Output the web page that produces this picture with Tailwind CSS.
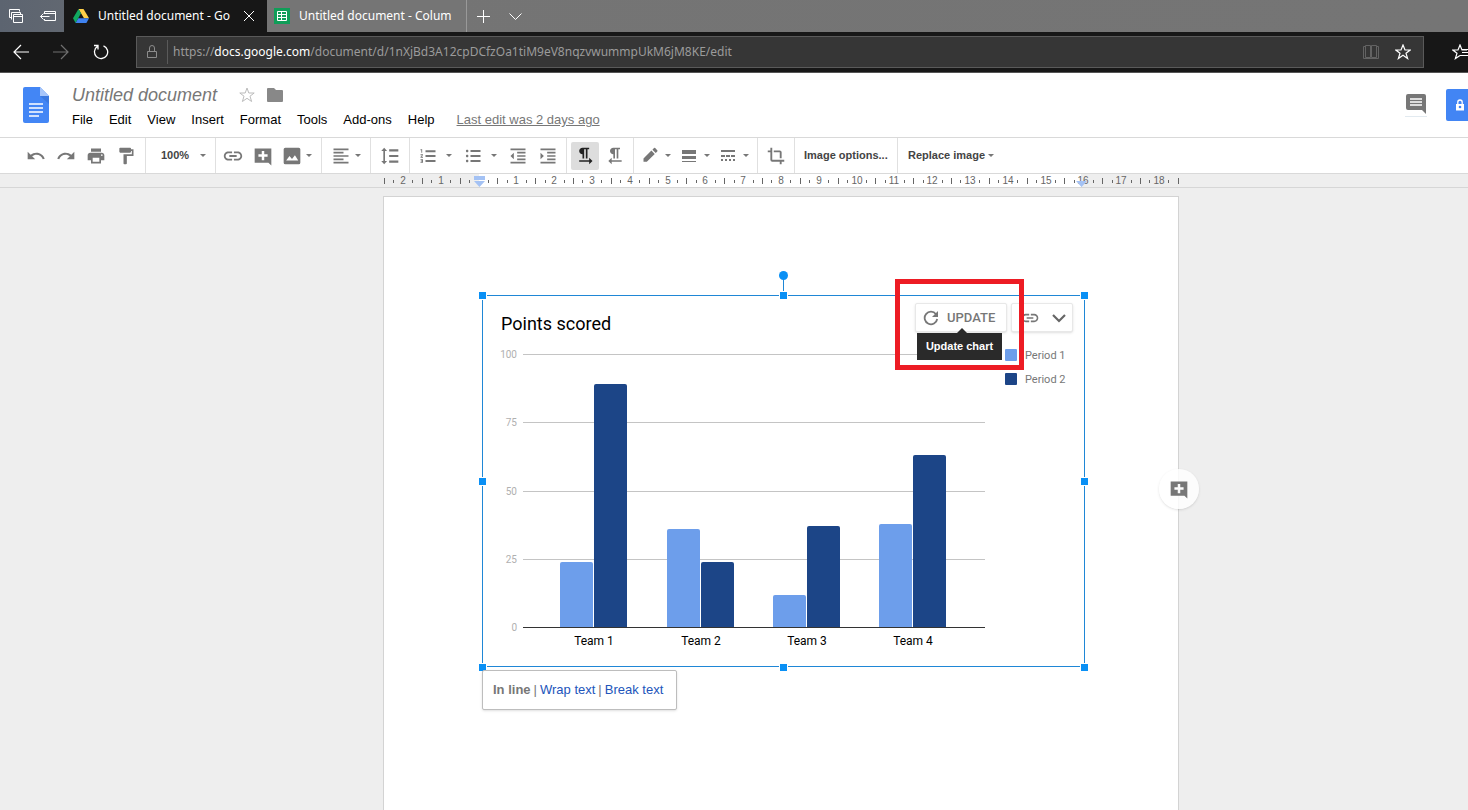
<!DOCTYPE html>
<html lang="en">
<head>
  <meta charset="UTF-8">
  <title>Untitled document - Google Docs</title>
  <script src="https://cdn.jsdelivr.net/npm/@tailwindcss/browser@4"></script>
</head>
<body class="h-screen flex flex-col overflow-hidden bg-[#eeeeee] font-['Liberation_Sans',Arial,sans-serif]">

  <!-- shared icons -->
  <svg class="hidden">
    <symbol id="caret" viewBox="0 0 6 4"><path d="M0 0h6L3 3z"/></symbol>
    <symbol id="add-comment" viewBox="0 0 24 24"><path d="M22 3H2v17h16.500l3.500 3.500zM17.500 13h-4v4h-3v-4h-4v-3h4V6h3v4h4z"/></symbol>
    <symbol id="link" viewBox="0 0 24 24"><path d="M3.900 12c0-1.710 1.390-3.100 3.100-3.100h4V7H7c-2.760 0-5 2.240-5 5s2.240 5 5 5h4v-1.900H7c-1.710 0-3.100-1.390-3.100-3.100zM8 13h8v-2H8v2zm9-6h-4v1.900h4c1.710 0 3.100 1.390 3.100 3.100s-1.390 3.100-3.100 3.100h-4V17h4c2.760 0 5-2.240 5-5s-2.240-5-5-5z"/></symbol>
  </svg>

  <!-- browser tabs -->
  <div class="h-8 shrink-0 flex bg-linear-to-r from-[#5c6470] via-[#747474] via-20% to-[#757575] text-white text-xs font-['Noto_Sans','Open_Sans',sans-serif]">
    <div class="w-16 shrink-0 flex items-center pl-2 gap-4">
      <button aria-label="Tabs set aside"><svg class="w-4 h-4" viewBox="0 0 16 16" fill="none" stroke="#fff"><path d="M3.500 9.500h-2v-8h10v2M3.500 11.500v-7h9v2M5.500 6.500h9v8h-9zM5.500 8.500h9"/></svg></button>
      <button aria-label="Set tabs aside"><svg class="w-4 h-4" viewBox="0 0 16 16" fill="none" stroke="#fff"><path d="M4.500 6V3.500h11v9h-11V11M4.500 5.500h11M.5 8.500h9M3.500 5.500l-3 3 3 3"/></svg></button>
    </div>
    <div class="w-[203px] shrink-0 flex items-center bg-[#171717] pl-[9px] pr-3">
      <svg class="w-4 h-4 shrink-0" viewBox="0 0 16 16"><path d="M5.500 1h5L16 10.300h-5z" fill="#ffcf48"/><path d="M5.500 1L8 5.300 2.600 15 0 10.300z" fill="#11a861"/><path d="M5.300 10.300H16L13.400 15H2.600z" fill="#3f82f0"/></svg>
      <span class="ml-[9px] w-[138px] whitespace-nowrap">Untitled document - Go</span>
      <button class="ml-[7px]" aria-label="Close tab"><svg class="w-3 h-3" viewBox="0 0 12 12" stroke="#fff" fill="none"><path d="M1 1l10 10M11 1L1 11"/></svg></button>
    </div>
    <div class="w-[200px] shrink-0 flex items-center bg-[#757575] border-r border-[#999999] pl-[7px]">
      <svg class="w-4 h-4 shrink-0" viewBox="0 0 16 16"><path d="M0 0h16v16H0z" fill="#0f9d58"/><path d="M3.500 3.500h9v9h-9zM3.500 6.500h9M3.500 9.500h9M7.500 3.500v9" stroke="#fff" fill="none"/></svg>
      <span class="ml-[9px] whitespace-nowrap">Untitled document - Colum</span>
    </div>
    <button class="w-[33px] grid place-items-center" aria-label="New tab"><svg class="w-[13px] h-[13px]" viewBox="0 0 13 13" stroke="#fff"><path d="M6.500 0v13M0 6.500h13"/></svg></button>
    <button class="w-[30px] grid place-items-center" aria-label="Tab previews"><svg class="w-[13px] h-[13px]" viewBox="0 0 13 13" stroke="#fff" fill="none"><path d="M.5 3.500l6 6 6-6"/></svg></button>
  </div>

  <!-- address bar -->
  <div class="h-[41px] shrink-0 flex items-center bg-[#171717] border-b border-[#555555] overflow-hidden">
    <button class="ml-[13px] w-4 shrink-0" aria-label="Back"><svg class="w-4 h-4" viewBox="0 0 16 16" stroke="#fff" fill="none" stroke-width="1.200"><path d="M1 8h15M8 1L1 8l7 7"/></svg></button>
    <button class="ml-6 w-4 shrink-0" aria-label="Forward"><svg class="w-4 h-4" viewBox="0 0 16 16" stroke="#707070" fill="none" stroke-width="1.200"><path d="M0 8h15M8 1l7 7-7 7"/></svg></button>
    <button class="ml-6 w-4 shrink-0" aria-label="Refresh"><svg class="w-4 h-4" viewBox="0 0 16 16" stroke="#fff" fill="none" stroke-width="1.300"><path d="M10.500 1.800a6.600 6.600 0 1 1-6 .6M1 1.500h4v4"/></svg></button>
    <div class="ml-[27px] flex-1 h-8 flex items-center bg-[#363636] border border-[#5a5a5a]">
      <svg class="ml-[9px] w-3 h-4 shrink-0" viewBox="0 0 12 16" stroke="#8c8c8c" fill="none"><path d="M1.500 7.500h9v6h-9zM3.500 7V4a2.500 2.500 0 0 1 5 0v3"/></svg>
      <div class="ml-[9px] h-6 w-px shrink-0 bg-[#5a5a5a]"></div>
      <div class="ml-[5px] flex-1 whitespace-nowrap text-xs text-[#9b9b9b] font-['Noto_Sans','Open_Sans',sans-serif]">https://<span class="text-white">docs.google.com</span>/document/d/1nXjBd3A12cpDCfzOa1tiM9eV8nqzvwummpUkM6jM8KE/edit</div>
      <button aria-label="Reading view"><svg class="w-4 h-4" viewBox="0 0 16 16" stroke="#636363" fill="none"><path d="M2.500 1.500h5v12h-5zM8.500 1.500h5v12h-5zM2.500 2.500h-2v12h15v-12h-2"/></svg></button>
      <button class="ml-4 mr-3" aria-label="Add to favorites"><svg class="w-4 h-4" viewBox="0 0 16 16" stroke="#fff" fill="none" stroke-width="1.200"><path d="M8 1l2 5h5.200l-4.200 3.300 1.600 5.200L8 11.300l-4.600 3.200L5 9.300.8 6H6z"/></svg></button>
    </div>
    <button class="ml-7 w-4 shrink-0" aria-label="Favorites"><svg class="w-6 h-4" viewBox="0 0 24 16" stroke="#fff" fill="none" stroke-width="1.200"><path d="M15 6h-5L8 1 6 6H.8L5 9.300l-1.600 5.200L8 11.500M10 8.500h12M8 11.500h14M10 5.500h12"/></svg></button>
  </div>

  <!-- document header -->
  <header class="h-16 shrink-0 flex bg-white overflow-hidden">
    <a href="#" class="ml-[23px] mt-[14px] w-[26px] shrink-0" aria-label="Docs home"><svg class="w-[26px] h-9" viewBox="0 0 26 36"><path d="M2 0h15l9 9v25a2 2 0 0 1-2 2H2a2 2 0 0 1-2-2V2a2 2 0 0 1 2-2z" fill="#4386f5"/><path d="M17 0l9 9h-9z" fill="#a6c5fa"/><path d="M17 9h9v8z" fill="#3a78e0"/><path d="M6 17h14M6 21h14M6 25h14M6 29h10" stroke="#fff" stroke-width="1.600"/></svg></a>
    <div class="ml-[23px] flex-1">
      <div class="mt-3 h-5 flex items-center">
        <h1 class="italic text-lg leading-5 text-[#777777]">Untitled document</h1>
        <button class="ml-[22px]" aria-label="Star"><svg class="w-4 h-4" viewBox="0 0 16 16" stroke="#bbbbbb" fill="none"><path d="M8 1l1.800 5h5.400L11 9.200l1.600 5.300L8 11.300l-4.600 3.200L5 9.200.8 6h5.400z"/></svg></button>
        <button class="ml-3" aria-label="Move to folder"><svg class="w-4 h-4" viewBox="0 0 16 16" fill="#888888"><path d="M1 1h6l2 2h6a1 1 0 0 1 1 1v10a1 1 0 0 1-1 1H1a1 1 0 0 1-1-1V2a1 1 0 0 1 1-1z"/></svg></button>
      </div>
      <nav class="mt-[5px] h-5 flex items-center gap-4 text-[13px] text-black whitespace-nowrap">
        <button>File</button>
        <button>Edit</button>
        <button>View</button>
        <button>Insert</button>
        <button>Format</button>
        <button>Tools</button>
        <button>Add-ons</button>
        <button>Help</button>
        <a href="#" class="ml-[6px] underline text-[#777777]">Last edit was 2 days ago</a>
      </nav>
    </div>
    <button class="mt-[21px] mr-[19px] w-[22px] h-[23px] shrink-0 border-b border-[#e2eaf0]" aria-label="Comments"><svg class="w-[22px] h-[22px]" viewBox="0 0 22 22"><path d="M3 0h16a2 2 0 0 1 2 2v18l-4-4H3a2 2 0 0 1-2-2V2a2 2 0 0 1 2-2z" fill="#777777"/><path d="M5 5h12M5 8h12M5 11h12" stroke="#fff" stroke-width="1.500"/></svg></button>
    <button class="mt-4 h-8 w-[22px] shrink-0 overflow-hidden flex items-center bg-[#4285f4] rounded-l-xs pl-2" aria-label="Share"><svg class="w-3 h-3 shrink-0" viewBox="0 0 12 12"><path d="M2 5h8v6.500H2z" fill="#fff"/><path d="M3.800 5V3.200a2.200 2.200 0 0 1 4.400 0V5" stroke="#fff" fill="none" stroke-width="1.300"/><circle cx="6" cy="8" r="1.300" fill="#4285f4"/></svg></button>
  </header>

  <!-- toolbar -->
  <div class="h-[37px] shrink-0 flex bg-white border-y border-[#d9d9d9] text-[11px] font-bold text-[#444444] fill-[#777777] whitespace-nowrap">
    <div class="w-[146px] flex items-center pl-[21px] border-r border-[#e0e0e0]">
      <button class="w-[30px] grid place-items-center" aria-label="Undo"><svg class="w-5 h-5" viewBox="0 0 24 24"><path d="M12.500 8c-2.650 0-5.050.99-6.900 2.600L2 7v9h9l-3.620-3.620c1.390-1.160 3.160-1.880 5.120-1.880 3.540 0 6.550 2.310 7.600 5.500l2.370-.78C21.080 11.030 17.150 8 12.500 8z"/></svg></button>
      <button class="w-[30px] grid place-items-center" aria-label="Redo"><svg class="w-5 h-5" viewBox="0 0 24 24"><path d="M18.400 10.600C16.550 8.990 14.150 8 11.500 8c-4.650 0-8.580 3.030-9.960 7.220L3.900 16c1.050-3.190 4.050-5.500 7.600-5.500 1.950 0 3.730.72 5.120 1.880L13 16h9V7l-3.600 3.600z"/></svg></button>
      <button class="w-[30px] grid place-items-center" aria-label="Print"><svg class="w-5 h-5" viewBox="0 0 24 24"><path d="M19 8H5c-1.660 0-3 1.340-3 3v6h4v4h12v-4h4v-6c0-1.660-1.340-3-3-3zm-3 11H8v-5h8v5zm3-7c-.55 0-1-.45-1-1s.45-1 1-1 1 .45 1 1-.45 1-1 1zm-1-9H6v4h12V3z"/></svg></button>
      <button class="w-[30px] grid place-items-center" aria-label="Paint format"><svg class="w-5 h-5" viewBox="0 0 24 24"><path d="M18 4V3c0-.55-.45-1-1-1H5c-.55 0-1 .45-1 1v4c0 .55.45 1 1 1h12c.55 0 1-.45 1-1V6h1v4H9v11c0 .55.45 1 1 1h2c.55 0 1-.45 1-1v-9h8V4h-3z"/></svg></button>
    </div>
    <div class="w-[70px] flex items-center border-r border-[#e0e0e0]">
      <select aria-label="Zoom" class="appearance-none w-[54px] pl-[15px] bg-transparent">
        <option>100%</option>
      </select>
      <svg class="w-[6px] h-1"><use href="#caret"/></svg>
    </div>
    <div class="w-[106px] flex items-center pl-[2px] border-r border-[#e0e0e0]">
      <button class="w-[30px] grid place-items-center" aria-label="Insert link"><svg class="w-[22px] h-[22px]"><use href="#link"/></svg></button>
      <button class="w-[30px] grid place-items-center" aria-label="Add comment"><svg class="w-5 h-5"><use href="#add-comment"/></svg></button>
      <button class="flex items-center pl-1 gap-1" aria-label="Insert image"><svg class="w-5 h-5" viewBox="0 0 24 24"><path d="M22 20V4a2 2 0 0 0-2-2H4a2 2 0 0 0-2 2v16a2 2 0 0 0 2 2h16a2 2 0 0 0 2-2zM5 17.500l4-5.500 3 3.500 3.500-4.500 4 6.500z"/></svg><svg class="w-[6px] h-1"><use href="#caret"/></svg></button>
    </div>
    <div class="w-[49px] flex items-center pl-[9px] border-r border-[#e0e0e0]">
      <button class="flex items-center gap-1" aria-label="Align"><svg class="w-5 h-5" viewBox="0 0 24 24"><path d="M15 15H3v2h12v-2zm0-8H3v2h12V7zM3 13h18v-2H3v2zm0 8h18v-2H3v2zM3 3v2h18V3H3z"/></svg><svg class="w-[6px] h-1"><use href="#caret"/></svg></button>
    </div>
    <div class="w-[39px] grid place-items-center border-r border-[#e0e0e0]">
      <button aria-label="Line spacing"><svg class="w-5 h-5" viewBox="0 0 24 24"><path d="M6 6h2.500L5 2 1.500 6H4v12H1.500L5 22l3.500-4H6V6zm5-2v2.500h11V4H11zm0 16h11v-2.500H11V20zm0-6.700h11v-2.500H11v2.500z"/></svg></button>
    </div>
    <div class="w-[157px] flex items-center pl-2 border-r border-[#e0e0e0]">
      <button class="flex items-center gap-2 w-[45px]" aria-label="Numbered list"><svg class="w-5 h-5" viewBox="0 0 24 24"><path d="M3 17h2v.5H4v1h1v.5H3v1h3v-4H3v1zm1-9h1V4H3v1h1v3zm-1 3h1.800L3 13.100v.9h3v-1H4.200L6 10.900V10H3v1zm6-6v2.400h12V5H9zm0 14.200h12v-2.400H9v2.400zm0-6h12v-2.400H9v2.400z"/></svg><svg class="w-[6px] h-1"><use href="#caret"/></svg></button>
      <button class="flex items-center gap-2 w-[45px]" aria-label="Bulleted list"><svg class="w-5 h-5" viewBox="0 0 24 24"><path d="M5 10.500c-.83 0-1.500.67-1.500 1.500s.67 1.500 1.500 1.500 1.500-.67 1.500-1.500-.67-1.500-1.500-1.500zm0-6c-.83 0-1.500.67-1.500 1.500S4.170 7.500 5 7.500 6.500 6.830 6.500 6 5.830 4.500 5 4.500zm0 12c-.83 0-1.500.68-1.500 1.500s.68 1.500 1.500 1.500 1.500-.68 1.500-1.500-.67-1.500-1.500-1.500zM9 19.200h12v-2.400H9v2.400zm0-6h12v-2.400H9v2.400zm0-8.400v2.400h12V4.800H9z"/></svg><svg class="w-[6px] h-1"><use href="#caret"/></svg></button>
      <button class="w-[30px]" aria-label="Decrease indent"><svg class="w-5 h-5" viewBox="0 0 24 24"><path d="M11 17h10v-2H11v2zm-8-5l4 4V8l-4 4zm0 9h18v-2H3v2zM3 3v2h18V3H3zm8 6h10V7H11v2zm0 4h10v-2H11v2z"/></svg></button>
      <button aria-label="Increase indent"><svg class="w-5 h-5" viewBox="0 0 24 24"><path d="M3 21h18v-2H3v2zM3 8v8l4-4-4-4zm8 9h10v-2H11v2zM3 3v2h18V3H3zm8 6h10V7H11v2zm0 4h10v-2H11v2z"/></svg></button>
    </div>
    <div class="w-[67px] flex items-center pl-1 gap-[6px] border-r border-[#e0e0e0]">
      <button class="w-7 h-7 grid place-items-center rounded-xs bg-[#dddddd] fill-[#222222]" aria-label="Left-to-right"><svg class="w-5 h-5" viewBox="0 0 24 24"><path d="M9 10v5h2V4h2v11h2V4h2V2H9C6.790 2 5 3.790 5 6s1.790 4 4 4zm12 8l-4-4v3H5v2h12v3l4-4z"/></svg></button>
      <button aria-label="Right-to-left"><svg class="w-5 h-5" viewBox="0 0 24 24"><path d="M10 10v5h2V4h2v11h2V4h2V2h-8C7.790 2 6 3.790 6 6s1.790 4 4 4zm-2 7v-3l-4 4 4 4v-3h12v-2H8z"/></svg></button>
    </div>
    <div class="w-[124px] flex items-center pl-[7px] gap-[9px] border-r border-[#e0e0e0]">
      <button class="flex items-center gap-1" aria-label="Border color"><svg class="w-5 h-5" viewBox="0 0 24 24"><path d="M3 15v4h4L16.500 9.500l-4-4zM19.500 6.500a1 1 0 0 0 0-1.400L17 2.500a1 1 0 0 0-1.400 0L13.700 4.400l4 4z"/></svg><svg class="w-[6px] h-1"><use href="#caret"/></svg></button>
      <button class="flex items-center gap-1" aria-label="Border weight"><svg class="w-5 h-5" viewBox="0 0 20 20"><path d="M2 4h14v4H2zM2 10h14v3H2zM2 15h14v1H2z"/></svg><svg class="w-[6px] h-1"><use href="#caret"/></svg></button>
      <button class="flex items-center gap-1" aria-label="Border dash"><svg class="w-5 h-5" viewBox="0 0 20 20"><path d="M2 4h14v2H2zM2 9h4v2H2zM7 9h4v2H7zM12 9h4v2h-4zM2 13h2v2H2zM6 13h2v2H6zM10 13h2v2h-2zM14 13h2v2h-2z"/></svg><svg class="w-[6px] h-1"><use href="#caret"/></svg></button>
    </div>
    <div class="w-[37px] grid place-items-center border-r border-[#e0e0e0]">
      <button aria-label="Crop"><svg class="w-[18px] h-[18px]" viewBox="0 0 24 24"><path d="M17 15h2.500V7a2.500 2.500 0 0 0-2.500-2.500H9V7h8v8zM7 17V1H4.500v3.500H1V7h3.500v10A2.500 2.500 0 0 0 7 19.500h10V23h2.500v-3.500H23V17H7z"/></svg></button>
    </div>
    <div class="w-[103px] flex items-center pl-[9px] border-r border-[#e0e0e0]">
      <button>Image options...</button>
    </div>
    <button class="flex items-center pl-[10px] gap-[3px]">Replace image <svg class="w-[6px] h-1"><use href="#caret"/></svg></button>
  </div>

  <!-- ruler, one unit is 1cm -->
  <div class="h-[14px] shrink-0 border-b border-[#d6d6d6] pl-[383px]">
    <svg id="ruler" class="w-[797px] h-[13px]" viewBox="0 0 797 13"></svg>
  </div>

  <!-- page -->
  <main class="flex-1 min-h-0 pt-2 pl-[383px]">
    <div class="relative w-[796px] h-full bg-white border border-b-0 border-[#d3d3d3] pt-[98px] pl-[98px]">
      <div class="relative w-[603px]">
        <svg id="chart" class="block w-[603px] h-[373px] font-['Roboto',sans-serif]" viewBox="0 0 603 373"></svg>

        <!-- linked chart controls -->
        <div class="absolute top-2 right-3 flex gap-1">
          <button class="w-[92px] h-[29px] flex items-center pl-[7px] gap-2 bg-white border border-[#e8e8e8] rounded-xs shadow text-[13px] font-medium text-[#777777] font-['Roboto',sans-serif]">
            <svg class="w-4 h-4" viewBox="0 0 16 16"><path d="M13 4.200A6.300 6.300 0 1 0 14.200 9" fill="none" stroke="#777777" stroke-width="1.800"/><path d="M15 1v6H9z" fill="#777777"/></svg>
            UPDATE
          </button>
          <button class="w-[62px] h-[29px] flex items-center pl-2 gap-3 bg-white border border-[#e8e8e8] rounded-xs shadow fill-[#777777]" aria-label="Link options">
            <svg class="w-5 h-5"><use href="#link"/></svg>
            <svg class="w-[14px] h-[14px]" viewBox="0 0 14 14" fill="none" stroke="#666666" stroke-width="2.200"><path d="M1 4l6 6 6-6"/></svg>
          </button>
        </div>
        <div role="tooltip" class="absolute left-[435px] top-[38px] w-[85px] h-[27px] grid place-items-center bg-[#2a2a2a] text-white text-[11px] font-bold whitespace-nowrap">
          Update chart
          <svg class="absolute -top-[5px] left-10 w-[10px] h-[5px]" viewBox="0 0 10 5"><path d="M5 0l5 5H0z" fill="#2a2a2a"/></svg>
        </div>
        <div class="absolute left-[413px] -top-4 w-[129px] h-[91px] border-5 border-[#ed1c24]"></div>

        <!-- text wrapping -->
        <div class="absolute top-[375px] left-0 w-[195px] h-10 flex items-center pl-[10px] gap-[3px] bg-white border border-[#bdbdbd] rounded-xs shadow text-[13px] text-[#777777] whitespace-nowrap">
          <button class="font-bold">In line</button>|<a href="#" class="text-[#2255bb]">Wrap text</a>|<a href="#" class="text-[#2255bb]">Break text</a>
        </div>
      </div>

      <button class="absolute left-[775px] top-[272px] w-10 h-10 grid place-items-center rounded-full bg-white/85 shadow fill-[#777777]" aria-label="Add a comment"><svg class="w-5 h-5"><use href="#add-comment"/></svg></button>
    </div>
  </main>

  <script>
    const CM = 37.8;
    const ZERO = 96;

    function drawRuler() {
      let html = '<rect x="96" width="602" height="13" fill="#fff"/>';
      for (let q = -10; q <= 74; q++) {
        const x = Math.floor(ZERO + q * CM / 4);
        if (q === 0) continue;
        if (q % 4 === 0) {
          html += `<text x="${x}" y="10" text-anchor="middle" font-size="10" fill="#666">${Math.abs(q / 4)}</text>`;
        } else if (q % 2 === 0) {
          html += `<rect x="${x}" y="4" width="1" height="6" fill="#666"/>`;
        } else {
          html += `<rect x="${x}" y="6" width="1" height="3" fill="#666"/>`;
        }
      }
      html += '<path d="M91 2h11v4H91zM91 7h11l-5.500 6zM693 7h11l-5.500 6z" fill="#a4c2f4"/>';
      document.getElementById('ruler').innerHTML = html;
    }

    function drawChart() {
      const teams = [
        { name: 'Team 1', values: [24, 89], x: 78 },
        { name: 'Team 2', values: [36, 24], x: 185 },
        { name: 'Team 3', values: [12, 37], x: 291 },
        { name: 'Team 4', values: [38, 63], x: 397 },
      ];
      const colors = ['#6d9eeb', '#1c4587'];
      const base = 332.4;
      const unit = 2.732;
      let html = '<text x="19" y="35" font-size="18" fill="#000">Points scored</text>';

      [100, 75, 50, 25, 0].forEach(v => {
        const y = Math.round(base - v * unit);
        html += `<text x="35" y="${y + 4}" text-anchor="end" font-size="10" fill="#b0b0b0">${v}</text>`;
        if (v) html += `<rect x="41" y="${y}" width="462" height="1" fill="#c4c4c4"/>`;
      });

      teams.forEach(t => {
        t.values.forEach((v, i) => {
          const left = t.x + i * 34;
          const top = Math.round(base - v * unit);
          html += `<path d="M${left} 332V${top + 2}q0 -2 2 -2h29q2 0 2 2V332z" fill="${colors[i]}"/>`;
        });
        html += `<text x="${t.x + 34}" y="350" text-anchor="middle" font-size="12" fill="#000">${t.name}</text>`;
      });
      html += '<rect x="41" y="332" width="462" height="1" fill="#333"/>';

      ['Period 1', 'Period 2'].forEach((p, i) => {
        html += `<rect x="523" y="${54 + i * 24}" width="12" height="12" rx="1" fill="${colors[i]}"/>
          <text x="543" y="${64 + i * 24}" font-size="11" fill="#777">${p}</text>`;
      });

      // selection frame and handles
      html += '<path d="M.5 .5h602v371H.5zM301.500 .5v-20" fill="none" stroke="#1f87d6"/>';
      [[0, 0], [301, 0], [602, 0], [0, 186], [602, 186], [0, 372], [301, 372], [602, 372]].forEach(([x, y]) => {
        html += `<rect x="${x - 4}" y="${y - 4}" width="9" height="9" fill="#fff"/><rect x="${x - 3}" y="${y - 3}" width="7" height="7" fill="#0a90f5"/>`;
      });
      html += '<circle cx="301.500" cy="-19.500" r="4.500" fill="#0a90f5"/>';
      const chart = document.getElementById('chart');
      chart.style.overflow = 'visible';
      chart.innerHTML = html;
    }

    drawRuler();
    drawChart();
  </script>
</body>
</html>
